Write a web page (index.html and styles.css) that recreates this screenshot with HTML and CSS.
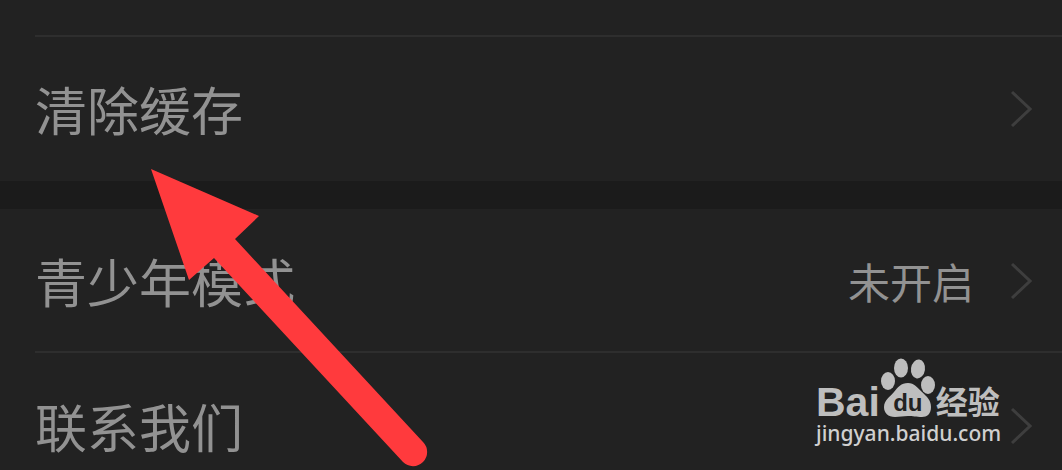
FILE: index.html
```html
<!DOCTYPE html>
<html lang="zh-CN">
<head>
    <meta charset="UTF-8">
    <meta name="viewport" content="width=device-width, initial-scale=1.0">
    <title>设置</title>
    <link rel="stylesheet" href="styles.css">
</head>
<body>
    <main class="settings">
        <section class="group group-top">
            <a class="row" href="#cache">
                <span class="label">清除缓存</span>
                <svg class="chevron" viewBox="0 0 22 38"><path d="M2 2 L20 19 L2 36"/></svg>
            </a>
        </section>

        <section class="group">
            <a class="row" href="#teen">
                <span class="label">青少年模式</span>
                <span class="value">未开启</span>
                <svg class="chevron" viewBox="0 0 22 38"><path d="M2 2 L20 19 L2 36"/></svg>
            </a>
            <a class="row" href="#contact">
                <span class="label">联系我们</span>
                <svg class="chevron" viewBox="0 0 22 38"><path d="M2 2 L20 19 L2 36"/></svg>
            </a>
        </section>
    </main>

    <!-- pointer to the cache row -->
    <svg class="arrow" viewBox="0 0 280 298">
        <path d="M1 0 L109 47 L85 70 L273 273 A14 14 0 0 1 253 293 L64 89 L39 111 Z"/>
    </svg>

    <div class="watermark">
        <div class="logo">
            <span class="logo-bai">Bai</span>
            <span class="paw">
                <svg viewBox="0 0 56 60">
                    <ellipse cx="8" cy="23" rx="7" ry="9"/>
                    <ellipse cx="21" cy="10" rx="7" ry="9.5"/>
                    <ellipse cx="38" cy="11" rx="7" ry="9.5" transform="rotate(8 38 11)"/>
                    <ellipse cx="48" cy="27" rx="7" ry="9"/>
                    <path d="M28 25 C34 25 38 30 42 34 C47 39 51 42 51 49 C51 56 47 59 42 59 C36 59 33 58 28 58 C23 58 20 59 15 59 C8 59 4 55 4 49 C4 42 10 39 14 34 C18 29 21 25 28 25 Z"/>
                </svg>
                <span class="paw-text">du</span>
            </span>
            <span class="logo-cn">经验</span>
        </div>
        <div class="site">jingyan.baidu.com</div>
    </div>
</body>
</html>
```

FILE: styles.css
```css
* {
    box-sizing: border-box;
}

body {
    margin: 0;
    min-height: 100vh;
    position: relative;
    overflow: hidden;
    background-color: #222;
    color: #929292;
    font-family: "Noto Sans CJK SC", sans-serif;
}

.group {
    padding-left: 35px;
}

.group-top {
    padding-top: 35px;
    border-bottom: 28px solid #1b1b1b;
}

.row {
    display: flex;
    align-items: center;
    height: 142px;
    padding-top: 2px;
    padding-right: 30px;
    color: inherit;
    text-decoration: none;
}

.group-top .row {
    height: 146px;
    padding-top: 0;
    border-top: 2px solid #2e2e2e;
}

.row + .row {
    height: 117px;
    align-items: flex-start;
    padding-top: 37px;
    border-top: 2px solid #2e2e2e;
}

.label {
    flex: 1;
    font-size: 52px;
    line-height: 72px;
    font-weight: 400;
}

.value {
    margin-right: 36px;
    font-size: 42px;
    line-height: 72px;
    font-weight: 400;
}

.chevron {
    width: 22px;
    height: 38px;
    fill: none;
    stroke: #3e3e3e;
    stroke-width: 3;
}

.row + .row .chevron {
    margin-top: 17px;
}

.arrow {
    position: absolute;
    left: 150px;
    top: 169px;
    width: 280px;
    height: 298px;
    fill: #ff3a3d;
}

/* Watermark in the corner */
.watermark {
    position: absolute;
    right: 58px;
    bottom: 22px;
    width: 188px;
    color: #bebebe;
}

.logo {
    display: flex;
    align-items: flex-end;
    height: 60px;
}

.logo-bai {
    font: bold 41px/32px "Liberation Sans", sans-serif;
}

.paw {
    position: relative;
    width: 56px;
    height: 60px;
}

.paw svg {
    display: block;
    width: 56px;
    height: 60px;
    fill: #bebebe;
}

.paw-text {
    position: absolute;
    left: 0;
    right: 0;
    bottom: 2px;
    color: #222;
    text-align: center;
    font: bold 24px/26px "Liberation Sans", sans-serif;
}

.logo-cn {
    font-size: 32px;
    line-height: 36px;
    font-weight: 700;
}

.site {
    color: #d0d0d0;
    font: 500 21px/30px "Noto Sans", sans-serif;
}
```
